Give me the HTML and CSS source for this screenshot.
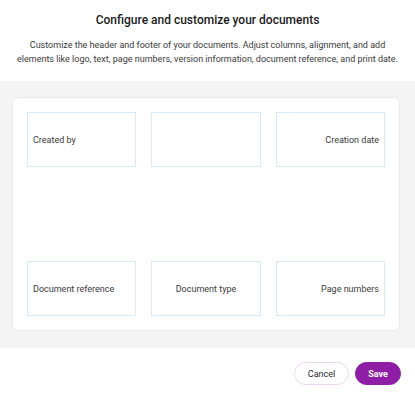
FILE: index.html
```html
<!DOCTYPE html>
<html>
<head>
<meta charset="utf-8">
<link rel="stylesheet" href="styles.css">
</head>
<body>
<div class="header">
  <h1 class="title">Configure and customize your documents</h1>
  <p class="desc">Customize the header and footer of your documents. Adjust columns, alignment, and add elements like logo, text, page numbers, version information, document reference, and print date.</p>
</div>
<div class="body">
  <div class="card">
    <div class="row">
      <div class="slot left">Created by</div>
      <div class="slot center"></div>
      <div class="slot right">Creation date</div>
    </div>
    <div class="row">
      <div class="slot left">Document reference</div>
      <div class="slot center">Document type</div>
      <div class="slot right">Page numbers</div>
    </div>
  </div>
</div>
<div class="footer">
  <button class="btn cancel">Cancel</button>
  <button class="btn save">Save</button>
</div>
</body>
</html>
```
FILE: styles.css
```css
html, body {
  margin: 0;
  padding: 0;
  background: #ffffff;
  font-family: Roboto, "Liberation Sans", Arial, sans-serif;
}
.header {
  padding: 10px 10px 15px;
  text-align: center;
}
.title {
  margin: 0;
  font-size: 12px;
  line-height: 20px;
  font-weight: 500;
  color: #1a1a1a;
}
.desc {
  margin: 8px auto 0;
  max-width: 382px;
  font-size: 9px;
  line-height: 14px;
  color: #3a3a3a;
}
.body {
  background: #f4f4f4;
  padding: 16px 15px 17px 12px;
}
.card {
  background: #ffffff;
  border: 1px solid #ebebeb;
  border-radius: 6px;
  padding: 14px;
  height: 204px;
  display: flex;
  flex-direction: column;
  justify-content: space-between;
}
.row {
  display: grid;
  grid-template-columns: 1fr 1fr 1fr;
  gap: 15px;
}
.slot {
  height: 53px;
  border: 1px solid #d8e9fb;
  display: flex;
  align-items: center;
  padding: 0 5px;
  font-size: 9px;
  color: #3a3a3a;
}
.slot.left { justify-content: flex-start; }
.slot.center { justify-content: center; }
.slot.right { justify-content: flex-end; }
.footer {
  display: flex;
  justify-content: flex-end;
  gap: 6px;
  padding: 14px 14px 0;
}
.btn {
  height: 23px;
  border-radius: 12px;
  font-family: Roboto, "Liberation Sans", Arial, sans-serif;
  font-size: 9px;
  padding: 0;
  cursor: pointer;
}
.cancel {
  width: 55px;
  background: #ffffff;
  border: 1px solid #ecd6ef;
  color: #2a2a2a;
}
.save {
  width: 46px;
  background: #8e1ea6;
  border: 1px solid #8e1ea6;
  color: #ffffff;
  font-weight: 700;
}
```
